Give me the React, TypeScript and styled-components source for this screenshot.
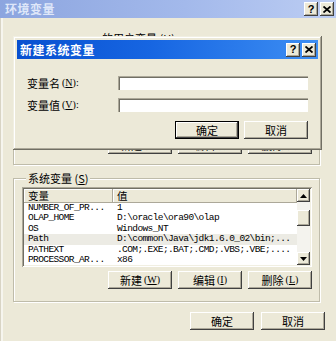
import styled, { createGlobalStyle } from 'styled-components';

const GlobalStyle = createGlobalStyle`
  html, body {
    margin: 0;
    padding: 0;
    background: #ece9d8;
  }
  body {
    font-family: "Noto Sans CJK SC", "Liberation Sans", sans-serif;
    font-size: 11px;
    color: #000;
  }
`;

const Window = styled.div`
  position: relative;
  width: 336px;
  height: 341px;
  overflow: hidden;
  background: #ece9d8;
  box-shadow: inset 1px 0 #d8d4c4, inset 3px 0 #f6f5ee;
`;

const TitleBar = styled.div<{ $active?: boolean }>`
  display: flex;
  align-items: center;
  height: ${p => (p.$active ? 19 : 18)}px;
  padding: 0 2px 0 ${p => (p.$active ? 3 : 5)}px;
  background: ${p =>
    p.$active
      ? 'linear-gradient(90deg, #0850d0 0%, #1766e2 45%, #3d8ef3 100%)'
      : 'linear-gradient(90deg, #8ca5df 0%, #a3b9eb 55%, #bccdf3 100%)'};
  color: ${p => (p.$active ? '#fff' : '#dfe7f9')};
`;

const TitleText = styled.span`
  flex: 1;
  font-size: 12px;
  font-weight: bold;
  line-height: 14px;
  letter-spacing: 0.5px;
`;

const CaptionButton = styled.span`
  display: flex;
  align-items: center;
  justify-content: center;
  width: 14px;
  height: 14px;
  margin-left: 2px;
  background: #ece9d8;
  box-shadow: inset -1px -1px #404040, inset 1px 1px #fff, inset -2px -2px #aca899;
  font-family: "Liberation Sans", sans-serif;
  font-weight: bold;
  font-size: 11px;
  line-height: 11px;
  color: #000;
`;

const Body = styled.div`
  display: flex;
  flex-direction: column;
  padding: 14px 11px 0 13px;
`;

const GroupBox = styled.fieldset<{ $height: number; $top?: number }>`
  margin: ${p => p.$top ?? 0}px 5px 0 0;
  padding: 0 7px 0 8px;
  height: ${p => p.$height}px;
  box-sizing: border-box;
  border: 1px solid #bfbcaa;
  box-shadow: inset 1px 1px #fff, 1px 1px #fff;
  display: flex;
  flex-direction: column;
`;

const GroupLegend = styled.legend<{ $indent: number }>`
  margin-left: ${p => p.$indent}px;
  padding: 0 2px;
  font-size: 11px;
  line-height: 12px;
  background: #ece9d8;
`;

const ListView = styled.div<{ $top: number }>`
  display: flex;
  height: 80px;
  margin-top: ${p => p.$top}px;
  padding: 2px;
  box-sizing: border-box;
  background: #fff;
  box-shadow: inset 1px 1px #aca899, inset -1px -1px #fff, inset 2px 2px #716f64, inset -2px -2px #f1efe2;
`;

const ListColumns = styled.div`
  flex: 1;
  display: flex;
  flex-direction: column;
  overflow: hidden;
`;

const HeaderRow = styled.div`
  display: grid;
  grid-template-columns: 89px 1fr;
  height: 14px;
  flex-shrink: 0;
`;

const HeaderCell = styled.div`
  display: flex;
  align-items: center;
  padding-left: 4px;
  background: #ece9d8;
  box-shadow: inset -1px -1px #aca899, inset 1px 1px #fff;
  font-size: 10.5px;
  line-height: 12px;
`;

const Row = styled.div<{ $selected?: boolean }>`
  display: grid;
  grid-template-columns: 89px 1fr;
  height: 10.4px;
  flex-shrink: 0;
  background: ${p => (p.$selected ? '#ecebe4' : '#fff')};
  font-family: "Liberation Mono", "DejaVu Sans Mono", monospace;
  font-size: 9.5px;
  line-height: 10.4px;
  letter-spacing: -0.6px;
  white-space: nowrap;
`;

const Cell = styled.span`
  padding-left: 4px;
  overflow: hidden;
`;

const ScrollBar = styled.div`
  display: flex;
  flex-direction: column;
  width: 13px;
  background: #f4f3ee;
`;

const ScrollButton = styled.div`
  display: flex;
  align-items: center;
  justify-content: center;
  height: 13px;
  flex-shrink: 0;
  background: #ece9d8;
  box-shadow: inset -1px -1px #404040, inset 1px 1px #fff, inset -2px -2px #aca899;
`;

const ScrollTrack = styled.div`
  flex: 1;
`;

const ScrollThumb = styled.div<{ $offset: number }>`
  height: 16px;
  margin-top: ${p => p.$offset}px;
  background: #ece9d8;
  box-shadow: inset -1px -1px #404040, inset 1px 1px #fff, inset -2px -2px #aca899;
`;

const ButtonRow = styled.div<{ $top: number; $gap: number }>`
  display: flex;
  justify-content: flex-end;
  gap: ${p => p.$gap}px;
  margin-top: ${p => p.$top}px;
`;

const Button = styled.button<{ $default?: boolean }>`
  display: flex;
  align-items: center;
  justify-content: center;
  width: 64px;
  height: 18px;
  padding: 0;
  border: none;
  background: #ece9d8;
  font-family: "Noto Sans CJK SC", "Liberation Sans", sans-serif;
  font-size: 11px;
  line-height: 12px;
  color: #000;
  box-shadow: ${p =>
    p.$default
      ? 'inset 0 0 0 1px #000, inset -2px -2px #404040, inset 2px 2px #fff, inset -3px -3px #aca899'
      : 'inset -1px -1px #404040, inset 1px 1px #fff, inset -2px -2px #aca899'};
`;

const Accel = styled.span`
  font-family: "Liberation Serif", serif;
  font-size: 10px;
  line-height: 12px;
  margin-left: 2px;
`;

const Dialog = styled.div`
  position: absolute;
  left: 13px;
  top: 36px;
  width: 309px;
  height: 114px;
  box-sizing: border-box;
  padding: 4px;
  background: #ece9d8;
  box-shadow: inset -1px -1px #716f64, inset 1px 1px #f1efe2, inset -2px -2px #aca899, inset 2px 2px #fff;
  display: flex;
  flex-direction: column;
`;

const FormGrid = styled.div`
  display: grid;
  grid-template-columns: 91px 1fr;
  grid-auto-rows: 14px;
  row-gap: 8px;
  align-items: center;
  padding: 17px 10px 0 10px;
`;

const FieldLabel = styled.label`
  display: flex;
  align-items: center;
  height: 14px;
  font-size: 11px;
  line-height: 12px;
`;

const TextBox = styled.div`
  height: 14px;
  background: #fff;
  box-shadow: inset 1px 1px #aca899, inset 2px 2px #716f64, inset -1px -1px #fff;
`;

const DialogButtons = styled(ButtonRow)`
  padding-right: 10px;
`;

const UpArrow = () => (
  <svg width="7" height="4" viewBox="0 0 7 4">
    <path d="M3.5 0 L7 4 L0 4 Z" fill="#000" />
  </svg>
);

const DownArrow = () => (
  <svg width="7" height="4" viewBox="0 0 7 4">
    <path d="M0 0 L7 0 L3.5 4 Z" fill="#000" />
  </svg>
);

const CloseGlyph = () => (
  <svg width="8" height="7" viewBox="0 0 8 7">
    <path d="M0.5 0.5 L7.5 6.5 M7.5 0.5 L0.5 6.5" stroke="#000" strokeWidth="1.8" />
  </svg>
);

const systemVars = [
  { name: 'NUMBER_OF_PR...', value: '1' },
  { name: 'OLAP_HOME', value: 'D:\\oracle\\ora90\\olap' },
  { name: 'OS', value: 'Windows_NT' },
  { name: 'Path', value: 'D:\\common\\Java\\jdk1.6.0_02\\bin;...', selected: true },
  { name: 'PATHEXT', value: '.COM;.EXE;.BAT;.CMD;.VBS;.VBE;....' },
  { name: 'PROCESSOR_AR...', value: 'x86' },
];

const ActionButtons = ({ top }: { top: number }) => (
  <ButtonRow $top={top} $gap={6}>
    <Button>新建<Accel>(<u>W</u>)</Accel></Button>
    <Button>编辑<Accel>(<u>I</u>)</Accel></Button>
    <Button>删除<Accel>(<u>L</u>)</Accel></Button>
  </ButtonRow>
);

const App = () => {
  return (
    <>
      <GlobalStyle />
      <Window>
        <TitleBar>
          <TitleText>环境变量</TitleText>
          <CaptionButton>?</CaptionButton>
          <CaptionButton><CloseGlyph /></CaptionButton>
        </TitleBar>

        <Body>
          {/* user variables, mostly hidden under the dialog */}
          <GroupBox $height={133}>
            <GroupLegend $indent={78}>的用户变量 (<u>U</u>)</GroupLegend>
            <ListView $top={6}>
              <ListColumns />
            </ListView>
            <ActionButtons top={6} />
          </GroupBox>

          <GroupBox $height={130} $top={7}>
            <GroupLegend $indent={4}>系统变量 (<u>S</u>)</GroupLegend>
            <ListView $top={3}>
              <ListColumns>
                <HeaderRow>
                  <HeaderCell>变量</HeaderCell>
                  <HeaderCell>值</HeaderCell>
                </HeaderRow>
                {systemVars.map(v => (
                  <Row key={v.name} $selected={v.selected}>
                    <Cell>{v.name}</Cell>
                    <Cell>{v.value}</Cell>
                  </Row>
                ))}
              </ListColumns>
              <ScrollBar>
                <ScrollButton><UpArrow /></ScrollButton>
                <ScrollTrack>
                  <ScrollThumb $offset={8} />
                </ScrollTrack>
                <ScrollButton><DownArrow /></ScrollButton>
              </ScrollBar>
            </ListView>
            <ActionButtons top={4} />
          </GroupBox>

          <ButtonRow $top={10} $gap={7}>
            <Button>确定</Button>
            <Button>取消</Button>
          </ButtonRow>
        </Body>

        <Dialog>
          <TitleBar $active>
            <TitleText>新建系统变量</TitleText>
            <CaptionButton>?</CaptionButton>
            <CaptionButton><CloseGlyph /></CaptionButton>
          </TitleBar>
          <FormGrid>
            <FieldLabel>变量名<Accel>(<u>N</u>):</Accel></FieldLabel>
            <TextBox />
            <FieldLabel>变量值<Accel>(<u>V</u>):</Accel></FieldLabel>
            <TextBox />
          </FormGrid>
          <DialogButtons $top={9} $gap={5}>
            <Button $default>确定</Button>
            <Button>取消</Button>
          </DialogButtons>
        </Dialog>
      </Window>
    </>
  );
};

export default App;
